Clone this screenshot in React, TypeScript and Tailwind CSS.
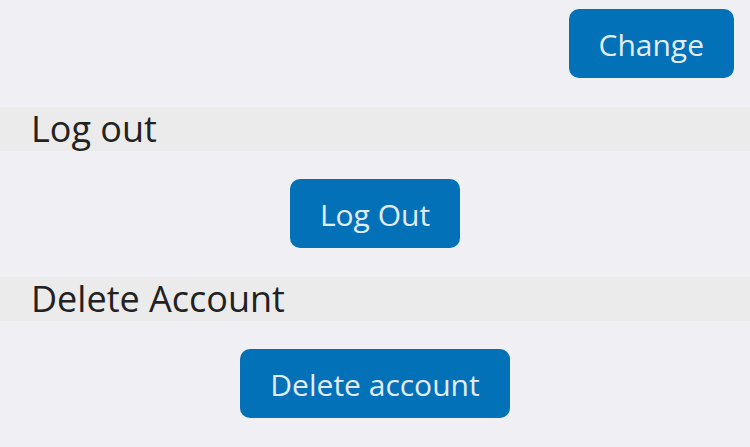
import React from "react";

function ActionButton({ label }: { label: string }) {
  return (
    <button className="h-[69px] rounded-[10px] bg-[#0271b8] px-[30px] pt-[3px] text-[30px] leading-none text-[#e3ecf5]">
      {label}
    </button>
  );
}

function SectionHeader({ title }: { title: string }) {
  return (
    <div className="flex h-[44px] items-center bg-[#ebebeb] pl-[31px] text-[36px] leading-none text-[#222222]">
      {title}
    </div>
  );
}

export default function App() {
  return (
    <div
      className="h-[447px] w-[750px] overflow-hidden bg-[#efeff4]"
      style={{ fontFamily: '"Open Sans", sans-serif' }}
    >
      <div className="flex justify-end pr-4 pt-[9px] pb-[29px]">
        <ActionButton label="Change" />
      </div>
      <SectionHeader title="Log out" />
      <div className="flex justify-center pt-[28px] pb-[29px]">
        <ActionButton label="Log Out" />
      </div>
      <SectionHeader title="Delete Account" />
      <div className="flex justify-center pt-[28px] pb-[29px]">
        <ActionButton label="Delete account" />
      </div>
    </div>
  );
}
